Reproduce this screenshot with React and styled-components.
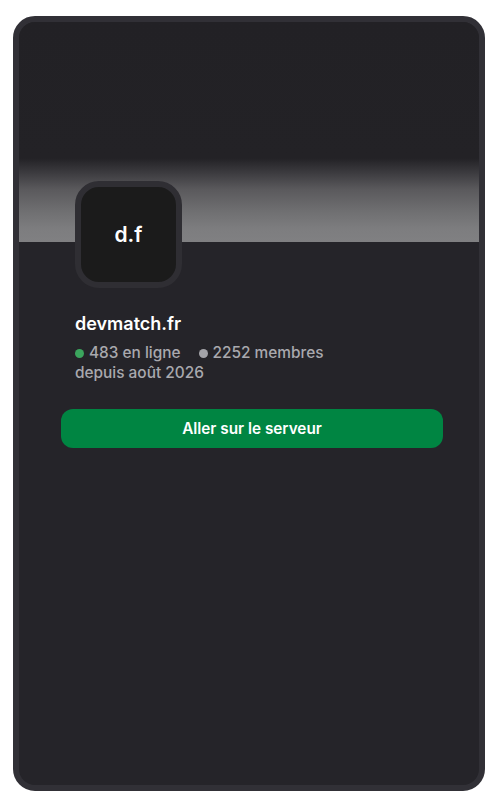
import React from 'react';
import styled, { createGlobalStyle } from 'styled-components';

const Global = createGlobalStyle`
  html, body { margin: 0; padding: 0; background: #ffffff; }
  body { font-family: Inter, "Noto Sans", sans-serif; }
`;

const Page = styled.div`
  padding: 16px 12px 11px 13px;
`;

const Card = styled.div`
  box-sizing: border-box;
  width: 472px;
  height: 775px;
  border: 6px solid #313036;
  border-radius: 22px;
  background: #252429;
  overflow: hidden;
  display: flex;
  flex-direction: column;
`;

const Banner = styled.div`
  height: 220px;
  flex-shrink: 0;
  background: linear-gradient(
    to bottom,
    #222125 0%,
    #232226 62%,
    #3a393d 68%,
    #5a595c 76%,
    #6f6f71 86%,
    #7d7d7f 94%,
    #808082 100%
  );
`;

const Body = styled.div`
  padding: 0 36px 0 42px;
  display: flex;
  flex-direction: column;
`;

const Avatar = styled.div`
  box-sizing: border-box;
  width: 107px;
  height: 107px;
  margin: -61px 0 0 14px;
  border: 6px solid #2f2e33;
  border-radius: 24px;
  background: #1b1b1b;
  display: flex;
  align-items: center;
  justify-content: center;
  color: #ffffff;
  font-size: 21px;
  font-weight: 600;
`;

const Info = styled.div`
  margin: 25px 0 0 14px;
`;

const Name = styled.div`
  color: #ffffff;
  font-size: 18px;
  font-weight: 600;
  line-height: 22px;
`;

const Stats = styled.div`
  margin-top: 8px;
  display: flex;
  gap: 18px;
  color: #a9a9ae;
  font-size: 15.4px;
  font-weight: 500;
  line-height: 20px;
`;

const Stat = styled.span`
  display: flex;
  align-items: center;
  gap: 5px;
`;

const Dot = styled.span`
  width: 9px;
  height: 9px;
  border-radius: 50%;
  background: ${p => p.$color};
`;

const Since = styled.div`
  color: #a9a9ae;
  font-size: 15.4px;
  font-weight: 500;
  line-height: 20px;
`;

const JoinButton = styled.button`
  margin-top: 26px;
  height: 39px;
  border: none;
  border-radius: 12px;
  background: #008542;
  color: #ffffff;
  font-family: Inter, "Noto Sans", sans-serif;
  font-size: 15.3px;
  font-weight: 600;
  cursor: pointer;
`;

export default function App() {
  return (
    <Page>
      <Global />
      <Card>
        <Banner />
        <Body>
          <Avatar>d.f</Avatar>
          <Info>
            <Name>devmatch.fr</Name>
            <Stats>
              <Stat><Dot $color="#3ba55d" />483 en ligne</Stat>
              <Stat><Dot $color="#a3a3a8" />2252 membres</Stat>
            </Stats>
            <Since>depuis août 2026</Since>
          </Info>
          <JoinButton>Aller sur le serveur</JoinButton>
        </Body>
      </Card>
    </Page>
  );
}
